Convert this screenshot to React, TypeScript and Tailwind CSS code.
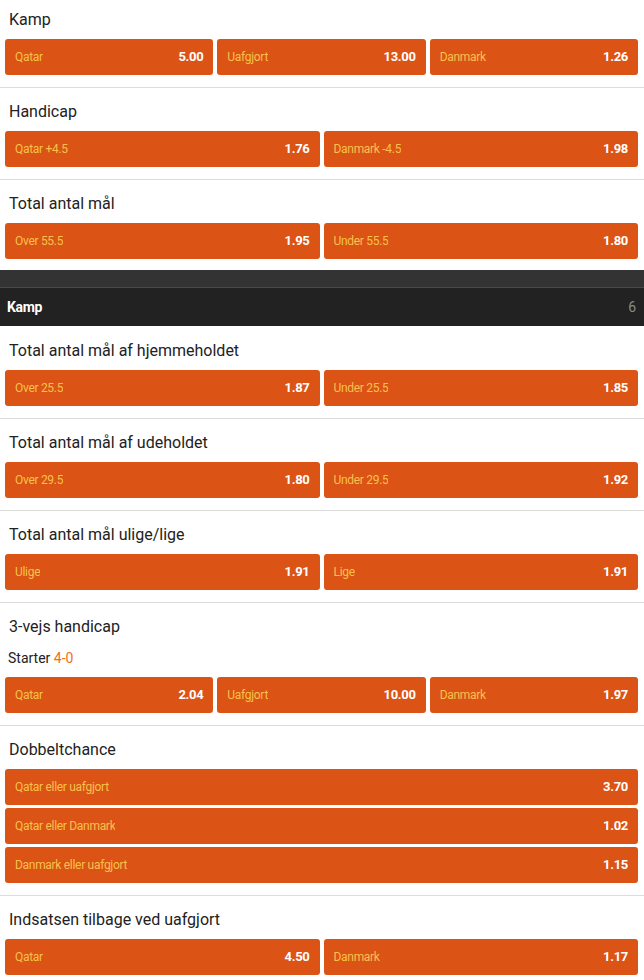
import React from 'react';

type Odd = { label: string; price: string };

interface MarketProps {
  title: string;
  odds: Odd[];
  stacked?: boolean;
  starter?: string;
  first?: boolean;
  last?: boolean;
}

function OddButton({ odd, full }: { odd: Odd; full?: boolean }) {
  return (
    <button
      className={`flex h-9 min-w-0 items-center justify-between rounded-[3px] bg-[#dc5316] px-[10px] text-left ${
        full ? 'w-full shrink-0' : 'flex-1'
      }`}
    >
      <span className="truncate text-[12px] tracking-[-0.3px] text-[#f6c24a]">{odd.label}</span>
      <span className="text-[13px] font-bold tracking-[-0.3px] text-white">{odd.price}</span>
    </button>
  );
}

function Market({ title, odds, stacked, starter, first, last }: MarketProps) {
  return (
    <section
      className={`pl-[5px] pr-[6px] ${first ? 'pt-[6px]' : 'pt-[10px]'} ${
        last ? 'pb-[11px]' : 'border-b border-[#dcdcdc] pb-[12px]'
      }`}
    >
      <h3 className="mb-[6px] pl-[4px] pt-[1px] text-[16px] leading-[26px] text-[#222]">{title}</h3>
      {starter && (
        <p className="mb-[8px] pl-[3px] pt-px text-[14px] leading-[22px] text-[#222]">
          Starter <span className="text-[#f07014]">{starter}</span>
        </p>
      )}
      {stacked ? (
        <div className="flex flex-col gap-[3px]">
          {odds.map((o) => (
            <OddButton key={o.label} odd={o} full />
          ))}
        </div>
      ) : (
        <div className="flex gap-[4px]">
          {odds.map((o) => (
            <OddButton key={o.label} odd={o} />
          ))}
        </div>
      )}
    </section>
  );
}

export default function App() {
  return (
    <div className="min-h-[980px] w-[644px] bg-white font-['Roboto',sans-serif]">
      <Market
        first
        title="Kamp"
        odds={[
          { label: 'Qatar', price: '5.00' },
          { label: 'Uafgjort', price: '13.00' },
          { label: 'Danmark', price: '1.26' },
        ]}
      />
      <Market
        title="Handicap"
        odds={[
          { label: 'Qatar +4.5', price: '1.76' },
          { label: 'Danmark -4.5', price: '1.98' },
        ]}
      />
      <Market
        last
        title="Total antal mål"
        odds={[
          { label: 'Over 55.5', price: '1.95' },
          { label: 'Under 55.5', price: '1.80' },
        ]}
      />

      {/* Group header */}
      <div className="h-[17px] bg-[#333333]" />
      <div className="h-px bg-[#4a4a4a]" />
      <div className="flex h-[38px] items-center justify-between bg-[#222222] pl-[7px] pr-[8px] pt-px">
        <span className="text-[14px] font-bold tracking-[-0.3px] text-white">Kamp</span>
        <span className="text-[14px] text-[#8a8a8a]">6</span>
      </div>

      <div className="pt-[1px]">
        <Market
          title="Total antal mål af hjemmeholdet"
          odds={[
            { label: 'Over 25.5', price: '1.87' },
            { label: 'Under 25.5', price: '1.85' },
          ]}
        />
      </div>
      <Market
        title="Total antal mål af udeholdet"
        odds={[
          { label: 'Over 29.5', price: '1.80' },
          { label: 'Under 29.5', price: '1.92' },
        ]}
      />
      <Market
        title="Total antal mål ulige/lige"
        odds={[
          { label: 'Ulige', price: '1.91' },
          { label: 'Lige', price: '1.91' },
        ]}
      />
      <Market
        title="3-vejs handicap"
        starter="4-0"
        odds={[
          { label: 'Qatar', price: '2.04' },
          { label: 'Uafgjort', price: '10.00' },
          { label: 'Danmark', price: '1.97' },
        ]}
      />
      <Market
        stacked
        title="Dobbeltchance"
        odds={[
          { label: 'Qatar eller uafgjort', price: '3.70' },
          { label: 'Qatar eller Danmark', price: '1.02' },
          { label: 'Danmark eller uafgjort', price: '1.15' },
        ]}
      />
      <Market
        last
        title="Indsatsen tilbage ved uafgjort"
        odds={[
          { label: 'Qatar', price: '4.50' },
          { label: 'Danmark', price: '1.17' },
        ]}
      />
    </div>
  );
}
